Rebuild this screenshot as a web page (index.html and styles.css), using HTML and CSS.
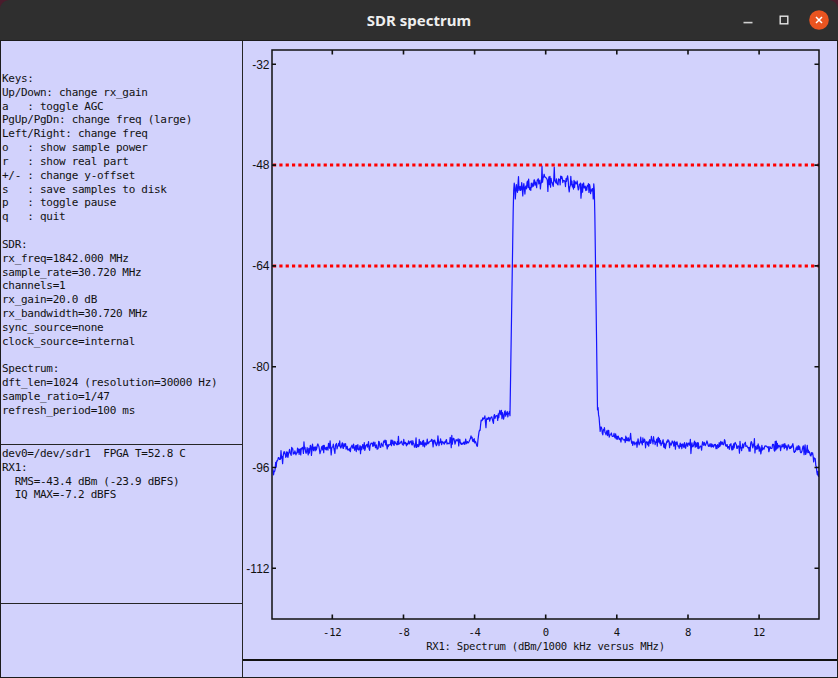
FILE: index.html
```html
<!DOCTYPE html>
<html>
<head>
<meta charset="utf-8">
<title>SDR spectrum</title>
<link rel="stylesheet" href="styles.css">
</head>
<body>
<div class="window">
  <header class="titlebar">
    <div class="spacer"></div>
    <div class="title">SDR spectrum</div>
    <div class="controls">
      <span class="btn"><svg width="20" height="20" viewBox="0 0 20 20"><line class="ctl-line" x1="5.5" y1="12.6" x2="14.5" y2="12.6"/></svg></span>
      <span class="btn"><svg width="20" height="20" viewBox="0 0 20 20"><rect class="ctl-box" x="6.2" y="6.2" width="7.6" height="7.6"/></svg></span>
      <span class="btn"><svg width="20" height="20" viewBox="0 0 20 20"><circle class="ctl-close" cx="10" cy="10" r="9.8"/><path class="ctl-x" d="M7 7L13 13M13 7L7 13"/></svg></span>
    </div>
  </header>
  <main class="content">
    <aside class="left">
<pre class="info keys">Keys:
Up/Down: change rx_gain
a   : toggle AGC
PgUp/PgDn: change freq (large)
Left/Right: change freq
o   : show sample power
r   : show real part
+/- : change y-offset
s   : save samples to disk
p   : toggle pause
q   : quit

SDR:
rx_freq=1842.000 MHz
sample_rate=30.720 MHz
channels=1
rx_gain=20.0 dB
rx_bandwidth=30.720 MHz
sync_source=none
clock_source=internal

Spectrum:
dft_len=1024 (resolution=30000 Hz)
sample_ratio=1/47
refresh_period=100 ms</pre>
<pre class="info status">dev0=/dev/sdr1  FPGA T=52.8 C
RX1:
  RMS=-43.4 dBm (-23.9 dBFS)
  IQ MAX=-7.2 dBFS</pre>
      <div class="info empty"></div>
    </aside>
    <section class="right">
      <div class="plot">
        <svg class="chart" width="594" height="618" viewBox="243 41 594 618">
          <polyline id="trace" class="trace" points=""/>
          <line class="limit" x1="273" y1="165.1" x2="819" y2="165.1"/>
          <line class="limit" x1="273" y1="265.9" x2="819" y2="265.9"/>
          <rect class="frame" x="272" y="50" width="547" height="569"/>
          <path class="ticks" d="M332.3 50v4.5M403.5 50v4.5M474.6 50v4.5M545.7 50v4.5M616.8 50v4.5M688 50v4.5M759.1 50v4.5
            M332.3 619v-4.5M403.5 619v-4.5M474.6 619v-4.5M545.7 619v-4.5M616.8 619v-4.5M688 619v-4.5M759.1 619v-4.5
            M272 64.3h4M272 165.1h4M272 265.9h4M272 366.7h4M272 467.5h4M272 568.3h4
            M819 64.3h-4.5M819 165.1h-4.5M819 265.9h-4.5M819 366.7h-4.5M819 467.5h-4.5M819 568.3h-4.5"/>
          <g class="ylab">
            <text x="269.5" y="68.5">-32</text>
            <text x="269.5" y="169.3">-48</text>
            <text x="269.5" y="270.1">-64</text>
            <text x="269.5" y="370.9">-80</text>
            <text x="269.5" y="471.7">-96</text>
            <text x="269.5" y="572.5">-112</text>
          </g>
          <g class="xlab">
            <text x="332.3" y="636">-12</text>
            <text x="403.5" y="636">-8</text>
            <text x="474.6" y="636">-4</text>
            <text x="545.7" y="636">0</text>
            <text x="616.8" y="636">4</text>
            <text x="688" y="636">8</text>
            <text x="759.1" y="636">12</text>
            <text x="545.5" y="650">RX1: Spectrum (dBm/1000 kHz versus MHz)</text>
          </g>
        </svg>
      </div>
      <div class="strip"></div>
    </section>
  </main>
</div>
<script src="script.js"></script>
</body>
</html>
```

FILE: styles.css
```css
html, body {
  margin: 0;
  padding: 0;
}
body {
  width: 838px;
  height: 678px;
  overflow: hidden;
  background: #4a1c2c;
}
.window {
  width: 838px;
  height: 678px;
  display: flex;
  flex-direction: column;
}
.titlebar {
  flex: none;
  height: 40px;
  background: #2f2f2f;
  border-radius: 9px 9px 0 0;
  display: grid;
  grid-template-columns: 1fr auto 1fr;
  align-items: center;
}
.title {
  color: #eeeeee;
  font-family: "Noto Sans", "DejaVu Sans", sans-serif;
  font-weight: bold;
  font-size: 15px;
  line-height: 20px;
}
.controls {
  display: flex;
  justify-content: flex-end;
  align-items: center;
  gap: 15.5px;
  padding-right: 9px;
}
.btn {
  width: 20px;
  height: 20px;
  display: flex;
}
.btn svg {
  display: block;
}
.ctl-line {
  stroke: #d0d0d0;
  stroke-width: 1.6;
}
.ctl-box {
  fill: none;
  stroke: #e6e6e6;
  stroke-width: 1.4;
}
.ctl-close {
  fill: #e95420;
}
.ctl-x {
  fill: none;
  stroke: #ffffff;
  stroke-width: 1.5;
}
.content {
  flex: 1;
  min-height: 0;
  display: flex;
  border: 1px solid #1c1c1c;
  background: #d2d2fc;
}
.left {
  flex: none;
  width: 241px;
  border-right: 1px solid #262626;
  display: flex;
  flex-direction: column;
}
.info {
  margin: 0;
  padding-left: 1px;
  font-family: "DejaVu Sans Mono", monospace;
  font-size: 11px;
  letter-spacing: -0.29px;
  line-height: 13.83px;
  color: #111111;
  white-space: pre;
  box-sizing: border-box;
}
.keys {
  height: 404px;
  padding-top: 31px;
  border-bottom: 1px solid #262626;
}
.status {
  height: 159px;
  padding-top: 2px;
  border-bottom: 1px solid #262626;
}
.empty {
  flex: 1;
}
.right {
  flex: 1;
  display: flex;
  flex-direction: column;
}
.plot {
  flex: none;
  height: 618px;
  border-bottom: 2px solid #111111;
}
.chart {
  display: block;
}
.strip {
  flex: 1;
}
.trace {
  fill: none;
  stroke: #1414ff;
  stroke-width: 1.2;
  stroke-linejoin: round;
}
.limit {
  stroke: #ff0000;
  stroke-width: 3;
  stroke-dasharray: 3.2 3.13;
}
.frame {
  fill: none;
  stroke: #111111;
  stroke-width: 1.5;
}
.ticks {
  fill: none;
  stroke: #111111;
  stroke-width: 1.6;
}
.ylab text {
  font-family: "Liberation Sans", Arial, sans-serif;
  font-size: 12px;
  fill: #111111;
  text-anchor: end;
}
.xlab text {
  font-family: "DejaVu Sans Mono", monospace;
  font-size: 10.6px;
  letter-spacing: -0.26px;
  fill: #111111;
  text-anchor: middle;
}
```

FILE: script.js
```js
(function () {
  var s = 20240611;
  function rnd() {
    s |= 0; s = s + 0x6D2B79F5 | 0;
    var t = Math.imul(s ^ s >>> 15, 1 | s);
    t = t + Math.imul(t ^ t >>> 7, 61 | t) ^ t;
    return ((t ^ t >>> 14) >>> 0) / 4294967296;
  }
  function gauss() {
    var u = rnd() || 1e-9, v = rnd();
    return Math.sqrt(-2 * Math.log(u)) * Math.cos(2 * Math.PI * v);
  }
  function base(x) {
    if (x < 291) return 452 + 22 * Math.exp(-(x - 273) / 5);
    if (x < 477) return 440 + 12 * Math.exp(-(x - 291) / 90);
    if (x < 482) return 441.5 - 24 * (x - 477) / 5;
    if (x < 510) return 417.5 - 3 * (x - 482) / 28;
    if (x < 513.5) return 414.5 - (414.5 - 192) * (x - 510) / 3.5;
    if (x < 594.5) return 190 - 9 * Math.sin(Math.PI * (x - 513.5) / 81);
    if (x < 597.5) return 190 + (410 - 190) * (x - 594.5) / 3;
    if (x < 606) return 433 - 23 * Math.exp(-(x - 597.5) / 2.5);
    if (x < 800) return 433 + 9 * (1 - Math.exp(-(x - 606) / 20)) + 6 * (x - 606) / 194;
    return 448 + 30 * Math.exp((x - 819) / 5);
  }
  var X0 = 273, X1 = 819, N = 1024, pts = [], lf = 0;
  for (var i = 0; i < N; i++) {
    var x = X0 + (X1 - X0) * i / (N - 1);
    var b = base(x), amp;
    if ((x > 509.5 && x < 514) || (x > 594 && x < 598)) amp = 0.3;
    else if (x >= 514 && x <= 594) amp = 3.2;
    else amp = 2.2;
    lf = 0.8 * lf + 0.2 * gauss() * 3;
    var n = gauss() * amp + lf * (amp / 2.2) * 0.9;
    if (rnd() < 0.07) n += (rnd() < 0.6 ? 1 : -1) * (3 + rnd() * 4) * amp / 2.2;
    pts.push(x.toFixed(2) + ',' + (b + n).toFixed(2));
  }
  document.getElementById('trace').setAttribute('points', pts.join(' '));
})();
```
